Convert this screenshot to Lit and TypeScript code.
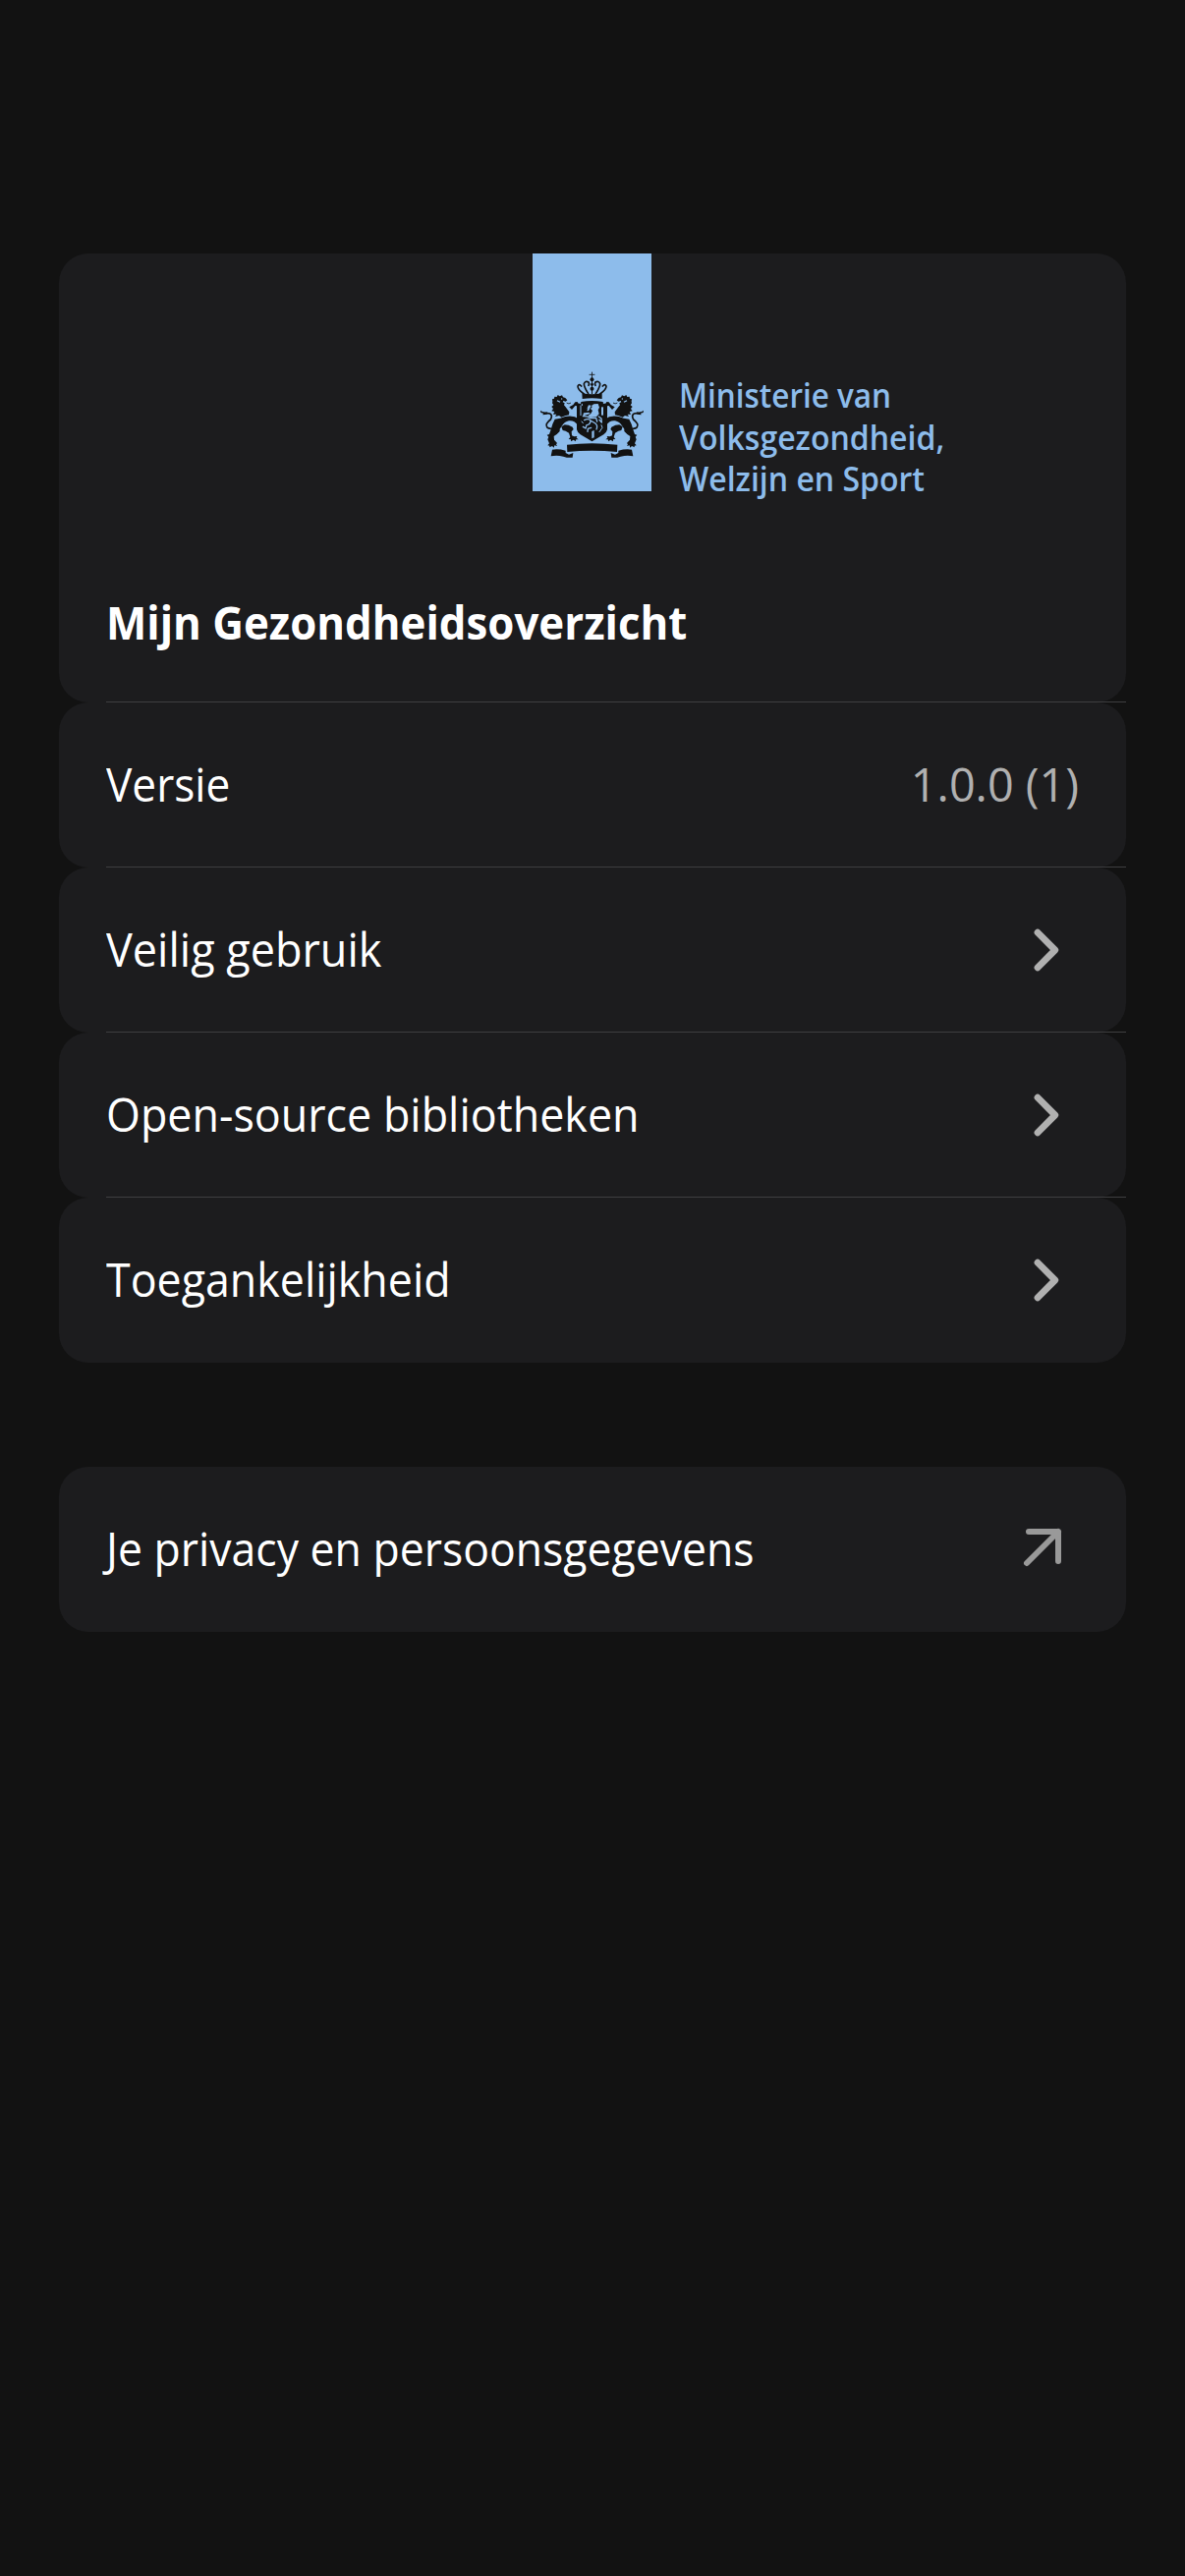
import { LitElement, html, svg, css, nothing } from "lit";
import { customElement, property } from "lit/decorators.js";
import { styleMap } from "lit/directives/style-map.js";

type RowIcon = "chevron" | "external";

interface Row {
  label: string;
  fit: number;
  value?: string;
  icon?: RowIcon;
}

const rows: Row[] = [
  { label: "Versie", fit: 0.94, value: "1.0.0 (1)" },
  { label: "Veilig gebruik", fit: 0.957, icon: "chevron" },
  { label: "Open-source bibliotheken", fit: 0.954, icon: "chevron" },
  { label: "Toegankelijkheid", fit: 0.952, icon: "chevron" },
];

const links: Row[] = [
  { label: "Je privacy en persoonsgegevens", fit: 0.948, icon: "external" },
];

const ministry = [
  { text: "Ministerie van", fit: 0.937 },
  { text: "Volksgezondheid,", fit: 0.954 },
  { text: "Welzijn en Sport", fit: 0.953 },
];

/* Text narrowed horizontally around its start or end edge. */
const fitted = (text: string, fit: number, cls = "") =>
  html`<span class="fit ${cls}" style=${styleMap({ transform: `scaleX(${fit})` })}>${text}</span>`;

@customElement("coat-of-arms")
export class CoatOfArms extends LitElement {
  static styles = css`
    :host { display: block; }
    svg { display: block; width: 105px; height: 88.67px; }
    .ink { fill: #121212; }
    .line { fill: none; stroke: #121212; stroke-linecap: round; stroke-linejoin: round; }
    .sky { fill: #8dbceb; }
    .skyline { fill: none; stroke: #8dbceb; stroke-linecap: round; stroke-linejoin: round; }
  `;

  private half() {
    return svg`
      <path class="ink" d="M97 146 L96 139 L102 137 L103 131 L110 132 L113 126 L119 130 L126 127 L129 133 L136 135 L142 142 L137 146 L130 144 L128 148 L134 151 L132 157 L137 163 L148 178 L147 187 Q134 189 124 194 L117 189 L105 192 L109 185 L99 185 L103 177 L94 175 L99 168 L94 162 L100 157 L96 151 Z"/>
      <path class="line" stroke-width="2.5" d="M141 151 Q147 155 152 151"/>
      <circle class="sky" cx="125" cy="138" r="2"/>
      <path class="sky" d="M112 142 L121 146 L119 149 L110 145 Z"/>
      <path class="ink" d="M148 163 L160 156 L166 148 L173 147 L175 152 L172 160 L166 159 L156 171 Z"/>
      <path class="ink" d="M174 198 L174 218 Q162 202 147 205 Q133 208 126 220 L119 230 L119 237 L110 246 L101 252 L102 263 L111 273 L108 277 L111 282 L103 280 L101 287 L96 282 L88 286 L88 281 L82 280 L87 274 L82 262 L85 254 L80 248 L87 246 L92 232 L97 215 L104 200 L121 197 Q138 190 154 191 Q166 191 174 198 Z"/>
      <path class="ink" d="M124 223 L134 217 L146 218 L158 224 L161 231 L155 238 L156 250 L163 253 L172 252 L170 257 L176 262 L169 262 L167 268 L161 263 L153 268 L153 262 L146 261 L151 255 L147 242 L137 236 L128 234 Z"/>
      <path class="line" stroke-width="5" d="M92 229 Q75 228 79 214 Q83 207 91 201 Q98 188 89 183 Q82 181 73 183"/>
      <path class="ink" d="M60 173 Q66 180 80 178 L82 184 L74 186 L67 187 L69 182 L61 180 Z"/>
      <path class="ink" d="M96 293 Q115 290 137 296 L137 303 L147 308 L160 303 L158 317 Q145 319 130 314 Q110 309 92 313 Z"/>
      <path class="line" stroke-width="5" d="M193 123 Q174 110 174 99 Q178 91 185 99"/>
      <path class="line" stroke-width="5" d="M206 122 Q193 101 193 92 Q197 82 207 87 Q210 92 207 97"/>
    `;
  }

  render() {
    return html`
      <svg viewBox="60 54 315 266" aria-hidden="true">
        ${this.half()}
        <g transform="translate(435 0) scale(-1 1)">${this.half()}</g>
        <path class="ink" d="M187 121 Q217 127 248 121 L248 138 Q217 133 188 138 Z"/>
        <path class="line" stroke-width="2.5" d="M217.5 57 V74 M210 64 H225"/>
        <circle class="ink" cx="217.5" cy="79" r="6"/>
        <path class="line" stroke-width="3" d="M217.5 84 V122"/>
        <circle class="ink" cx="217.5" cy="94" r="4.5"/>
        <circle class="ink" cx="217.5" cy="107" r="6"/>
        <path class="ink" d="M171 151 L183 153 L184 147 Q217 141 251 147 L252 153 L264 151 L264 232 Q263 239 253 247 L217.5 268 L182 247 Q172 239 171 232 Z"/>
        <path class="skyline" stroke-width="3" d="M187 154 L187 158 M183 159 V188"/>
        <path class="sky" d="M223 154 L236 153 L240 164 L236 172 L239 184 L231 193 L212 195 L205 190 L214 183 L219 174 L213 168 L218 163 L216 159 Z"/>
        <path class="sky" d="M207 157 L199 175 L191 183 L190 190 L201 187 L212 183 L206 177 L215 158 Z"/>
        <path class="ink" d="M192 177 L205 165 L202 175 L213 174 L210 179 L194 181 Z"/>
        <path class="sky" d="M246 163 H252 V188 H246 Z"/>
        <path class="skyline" stroke-width="4" d="M190 191 Q205 190 211 197 L230 196 L233 207"/>
        <path class="skyline" stroke-width="4" d="M238 192 L246 198 L247 210 L240 202 M194 203 Q206 196 213 204 L228 213 Q236 220 231 231 M213 204 Q213 217 201 218 L198 228 L190 223 M215 226 L205 229 L204 238"/>
        <path class="skyline" stroke-width="3" d="M246 218 L249 226 L240 239 M190 212 L186 207"/>
        <path class="sky" d="M217 237 L224 234 L224 256 L217 259 Z"/>
        <path class="ink" d="M141 278 Q217 269 295 278 L294 300 Q217 292 142 300 Z"/>
      </svg>
    `;
  }
}

@customElement("list-row")
export class ListRow extends LitElement {
  @property({ attribute: false }) row!: Row;
  @property({ type: Boolean }) divided = false;

  static styles = css`
    :host { display: block; }
    .row {
      display: flex; align-items: center; justify-content: space-between;
      box-sizing: border-box; height: 168px; padding: 0 48px;
      background: #1c1c1e; border-radius: 30px; white-space: nowrap;
    }
    .line { height: 1px; margin: -1px 0 0 48px; background: #3e3e40; }
    .fit { display: inline-block; transform-origin: 0 50%; line-height: 64px; padding-bottom: 3px; }
    .value { color: #b0b0b0; transform-origin: 100% 50%; }
    svg { display: block; width: 72px; height: 72px; fill: none; stroke-linecap: round; stroke-linejoin: round; }
    .chevron { stroke: #b0b0b0; stroke-width: 6.8; }
    .external { stroke: #999; stroke-width: 6; }
  `;

  private icon(name: RowIcon) {
    return name === "chevron"
      ? html`<svg class="chevron" viewBox="0 0 72 72" aria-hidden="true"><path d="M30 18.2 L47.8 36 L30 53.8"/></svg>`
      : html`<svg class="external" viewBox="0 0 72 72" aria-hidden="true"><path d="M21 18 H51 V48 M51 18 L19 50"/></svg>`;
  }

  render() {
    const { label, fit, value, icon } = this.row;
    return html`
      <div class="row">
        ${fitted(label, fit)}
        ${value ? fitted(value, 0.995, "value") : nothing}
        ${icon ? this.icon(icon) : nothing}
      </div>
      ${this.divided ? html`<div class="line"></div>` : nothing}
    `;
  }
}

@customElement("app-root")
export class AppRoot extends LitElement {
  static styles = css`
    :host {
      display: block; box-sizing: border-box; min-height: 2622px; padding: 258px 60px 0;
      background: #121212; color: #fff; font-family: "Open Sans", sans-serif; font-size: 47px;
    }
    .header { box-sizing: border-box; height: 457px; background: #1c1c1e; border-radius: 30px; white-space: nowrap; }
    .logo { display: flex; align-items: flex-start; padding-left: 482px; }
    .flag { box-sizing: border-box; width: 121px; height: 242.3px; padding: 120px 0 0 8px; background: #8dbceb; }
    .ministry {
      display: flex; flex-direction: column; padding: 123px 0 0 28px;
      color: #8dbceb; font-size: 33.6px; font-weight: 600;
    }
    .fit { display: inline-block; transform-origin: 0 50%; line-height: 64px; }
    .name { line-height: 42.7px; }
    .title { padding: 92px 48px 0; line-height: 0; }
    .heading { font-weight: 700; }
    .line { height: 1px; margin: -1px 0 0 48px; background: #3e3e40; }
    .links { margin-top: 106px; }
  `;

  render() {
    return html`
      <section>
        <div class="header">
          <div class="logo">
            <div class="flag"><coat-of-arms></coat-of-arms></div>
            <div class="ministry">${ministry.map((m) => fitted(m.text, m.fit, "name"))}</div>
          </div>
          <div class="title">${fitted("Mijn Gezondheidsoverzicht", 0.932, "heading")}</div>
        </div>
        <div class="line"></div>
        ${rows.map((r, i) => html`<list-row .row=${r} ?divided=${i < rows.length - 1}></list-row>`)}
      </section>
      <section class="links">
        ${links.map((r) => html`<list-row .row=${r}></list-row>`)}
      </section>
    `;
  }
}
